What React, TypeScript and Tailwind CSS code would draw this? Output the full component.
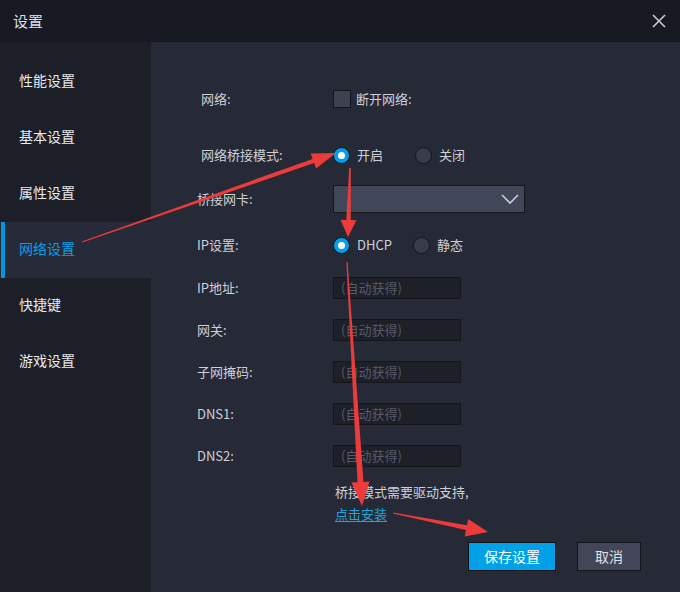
import React from "react";

const FONT = { fontFamily: '"Microsoft YaHei", "Noto Sans CJK SC", "Noto Sans", sans-serif' };

const NAV = ["性能设置", "基本设置", "属性设置", "网络设置", "快捷键", "游戏设置"];
const ACTIVE = 3;

// tapered arrow: thin tail, wider near the head, triangular head at the tip
function arrowPoints(x0: number, y0: number, x1: number, y1: number, w0: number, w1: number, hl: number, hw: number) {
  const dx = x1 - x0;
  const dy = y1 - y0;
  const len = Math.hypot(dx, dy);
  const ux = dx / len;
  const uy = dy / len;
  const nx = -uy;
  const ny = ux;
  const bx = x1 - ux * hl;
  const by = y1 - uy * hl;
  const pts = [
    [x0 + nx * w0, y0 + ny * w0],
    [bx + nx * w1, by + ny * w1],
    [bx + nx * hw, by + ny * hw],
    [x1, y1],
    [bx - nx * hw, by - ny * hw],
    [bx - nx * w1, by - ny * w1],
    [x0 - nx * w0, y0 - ny * w0],
  ];
  return pts.map((p) => p.map((v) => v.toFixed(1)).join(",")).join(" ");
}

function Radio({ on }: { on: boolean }) {
  return on ? (
    <span className="w-[17px] h-[17px] rounded-full bg-[#0a9de6] border border-[#12141a] flex items-center justify-center">
      <span className="w-[7px] h-[7px] rounded-full bg-white" />
    </span>
  ) : (
    <span className="w-[17px] h-[17px] rounded-full bg-[#393c49] border border-[#15171d]" />
  );
}

function Field({ label }: { label: string }) {
  return (
    <div className="flex items-center h-[22px]">
      <span className="pl-[46px] w-[182px] text-[13px] text-[#cdd0d9]">{label}</span>
      <div className="w-[128px] h-[22px] bg-[#1e2029] border border-[#15161c] flex items-center pl-[7px] text-[13px] text-[#565a6a]">
        (自动获得)
      </div>
    </div>
  );
}

export default function App() {
  return (
    <div className="relative w-[680px] h-[592px] bg-[#171a22] flex flex-col overflow-hidden" style={FONT}>
      <div className="h-[42px] flex items-center justify-between pl-[13px] pr-[13px] shrink-0">
        <span className="text-[15px] text-[#dcdfe6]">设置</span>
        <svg width="16" height="16" viewBox="0 0 16 16" className="text-[#c9cbd1]">
          <path d="M2 2 L14 14 M14 2 L2 14" stroke="currentColor" strokeWidth="1.6" fill="none" />
        </svg>
      </div>

      <div className="flex flex-1">
        <div className="w-[151px] bg-[#1c1e28] pt-[12px]">
          {NAV.map((n, i) => (
            <div
              key={n}
              className={`h-[56px] flex items-center pl-[19px] pb-[4px] text-[14px] relative ${
                i === ACTIVE ? "bg-[#272a39] text-[#0a9de6]" : "text-[#e8eaef]"
              }`}
            >
              {i === ACTIVE && <span className="absolute left-[1px] top-0 bottom-0 w-[4px] bg-[#0096e0]" />}
              {n}
            </div>
          ))}
        </div>

        <div className="flex-1 bg-[#262936] flex flex-col pt-[43px] text-[13px] text-[#cdd0d9]">
          <div className="flex items-center h-[28px]">
            <span className="pl-[50px] w-[182px]">网络:</span>
            <span className="w-[18px] h-[18px] bg-[#3e4150] border border-[#15161c]" />
            <span className="ml-[5px]">断开网络:</span>
          </div>

          <div className="flex items-center h-[28px] mt-[28px]">
            <span className="pl-[50px] w-[182px]">网络桥接模式:</span>
            <Radio on />
            <span className="ml-[7px] w-[58px]">开启</span>
            <Radio on={false} />
            <span className="ml-[7px]">关闭</span>
          </div>

          <div className="flex items-center h-[28px] mt-[16px]">
            <span className="pl-[46px] w-[182px]">桥接网卡:</span>
            <div className="w-[192px] h-[28px] bg-[#424659] border border-[#15171d] flex items-center justify-end pr-[4px]">
              <svg width="20" height="12" viewBox="0 0 20 12">
                <path d="M2 2 L10 10 L18 2" stroke="#c8ccd6" strokeWidth="1.6" fill="none" />
              </svg>
            </div>
          </div>

          <div className="flex items-center h-[28px] mt-[18px]">
            <span className="pl-[46px] w-[182px]">IP设置:</span>
            <Radio on />
            <span className="ml-[7px] w-[56px]">DHCP</span>
            <Radio on={false} />
            <span className="ml-[7px]">静态</span>
          </div>

          <div className="flex flex-col gap-[20px] mt-[18px]">
            <Field label="IP地址:" />
            <Field label="网关:" />
            <Field label="子网掩码:" />
            <Field label="DNS1:" />
            <Field label="DNS2:" />
          </div>

          <div className="pl-[184px] mt-[14px] leading-[22px]">
            <div>桥接模式需要驱动支持,</div>
            <div className="text-[#27a3d6] underline underline-offset-2">点击安装</div>
          </div>

          <div className="flex gap-[21px] pl-[317px] mt-[17px]">
            <button className="w-[88px] h-[29px] bg-[#02a0e6] border border-[#12141a] text-white text-[14px]">保存设置</button>
            <button className="w-[64px] h-[29px] bg-[#434659] border border-[#12141a] text-[#dfe1e7] text-[14px]">取消</button>
          </div>
        </div>
      </div>

      <svg className="absolute inset-0 pointer-events-none" width="680" height="592" viewBox="0 0 680 592">
        <g fill="#ec3b3b">
          <polygon points={arrowPoints(82, 242, 336, 153, 0.6, 2.2, 24, 8)} />
          <polygon points={arrowPoints(350, 168, 348, 237, 0.8, 2.2, 17, 8)} />
          <polygon points={arrowPoints(347, 262, 362, 506, 0.6, 3, 24, 9)} />
          <polygon points={arrowPoints(393, 513, 488, 532, 0.6, 2.4, 22, 9)} />
        </g>
      </svg>
    </div>
  );
}
